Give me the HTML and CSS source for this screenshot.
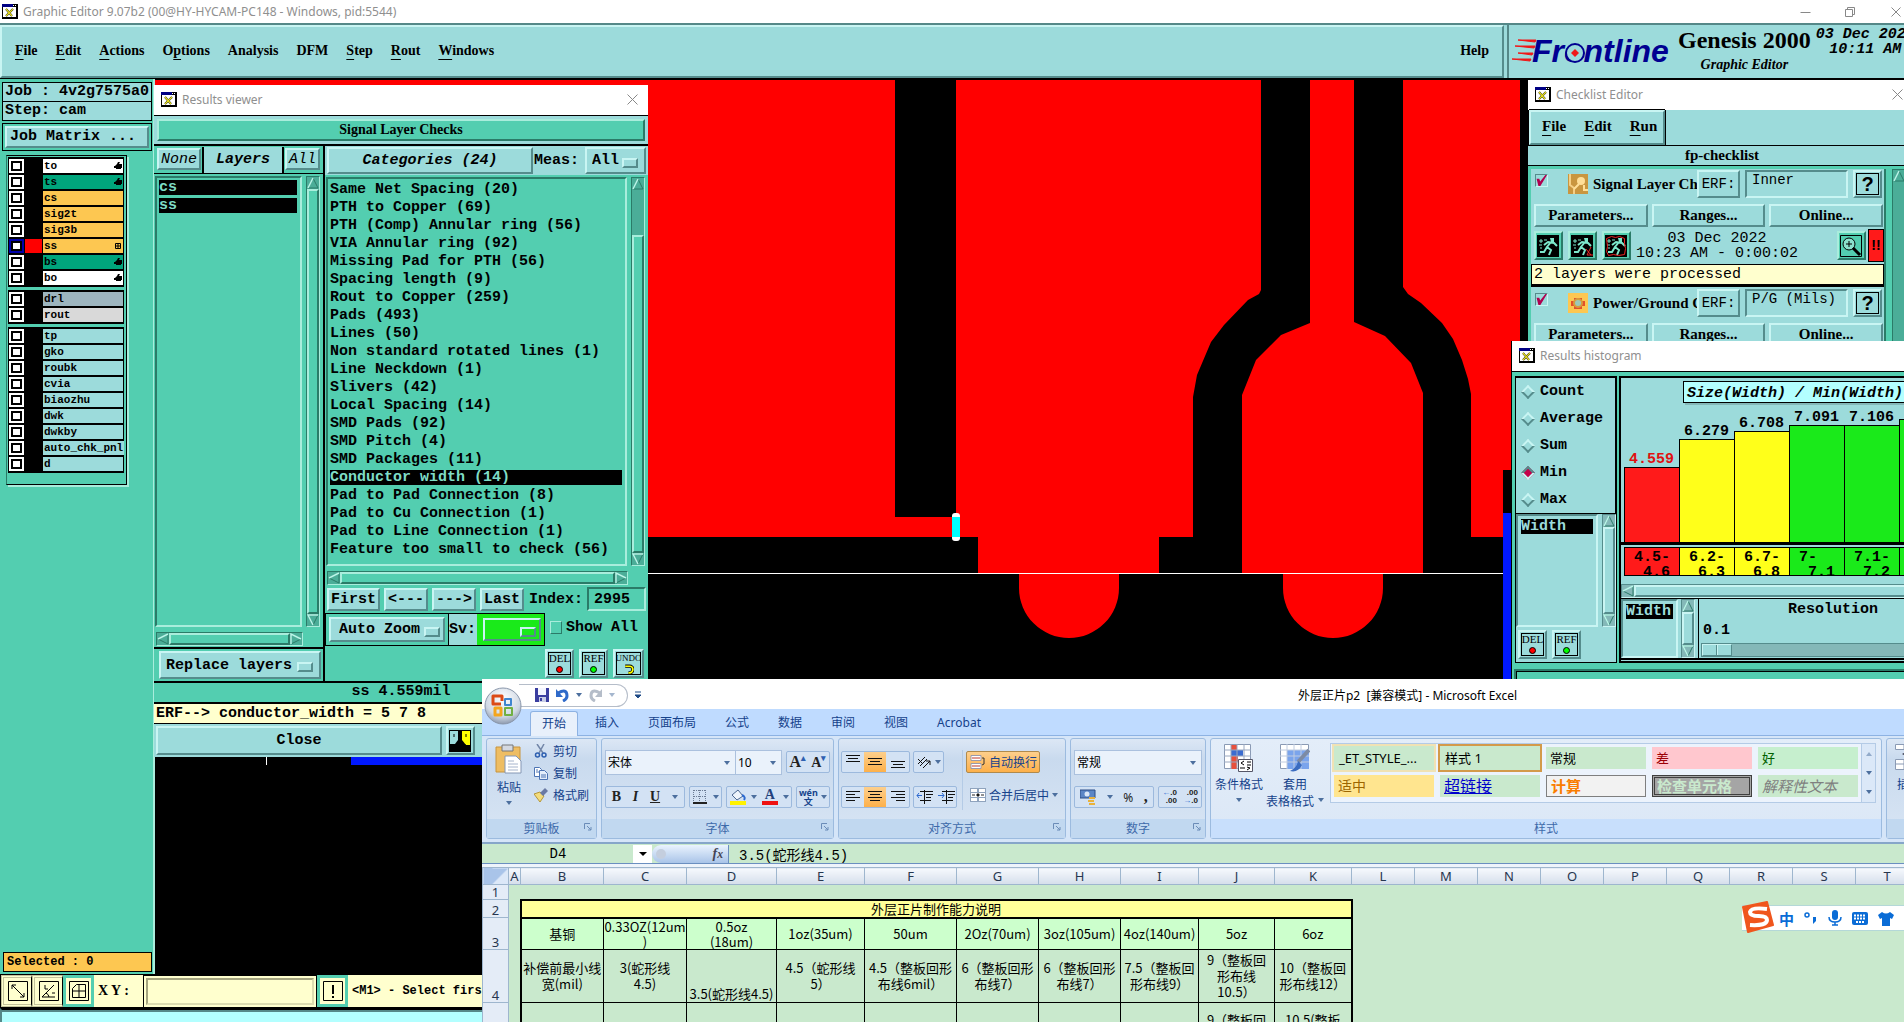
FILE: index.html
```html
<!DOCTYPE html>
<html lang="zh-CN">
<head>
    <meta charset="UTF-8">
    <meta name="viewport" content="width=device-width, initial-scale=1.0">
    <title>Graphic Editor 9.07b2</title>
    <link rel="stylesheet" href="styles.css">
</head>
<body>
    <!-- shared icons -->
    <svg class="defs" width="0" height="0">
        <symbol id="xwin" viewBox="0 0 16 15">
            <path d="M0 0h16v15H0z" fill="#000"/><path d="M1 3h13v10H1z" fill="#fff"/><path d="M0 0h11v3H0z" fill="#000084"/><path d="M11 1h1v1h-1zM13 1h1v1h-1z" fill="#fff"/>
            <path d="M4 5l6 7M11 5l-7 7" stroke="#222" stroke-width="2"/><path d="M4 5l6 7M11 5l-7 7" stroke="#e8e01c" stroke-width="1.2"/>
        </symbol>
        <symbol id="close" viewBox="0 0 11 11"><path d="M.5.5l10 10M10.500.5l-10 10" stroke="#888" fill="none"/></symbol>
        <symbol id="up" viewBox="0 0 12 12"><path d="M6 1L11 11H1z" fill="none" stroke="#2b7b68"/><path d="M1 11L6 1" stroke="#baf5e8" stroke-width="1.5"/></symbol>
        <symbol id="down" viewBox="0 0 12 12"><path d="M1 1h10L6 11z" fill="none" stroke="#2b7b68"/><path d="M11 1H1l5 10" fill="none" stroke="#baf5e8" stroke-width="1.5"/></symbol>
        <symbol id="left" viewBox="0 0 12 12"><path d="M11 1v10L1 6z" fill="none" stroke="#2b7b68"/><path d="M1 6L11 1" stroke="#baf5e8" stroke-width="1.5"/></symbol>
        <symbol id="right" viewBox="0 0 12 12"><path d="M1 1v10l10-5z" fill="none" stroke="#2b7b68"/><path d="M1 11V1l10 5" fill="none" stroke="#baf5e8" stroke-width="1.5"/></symbol>
        <symbol id="hand" viewBox="0 0 8 8"><path d="M4 0h2L5 2h3v4H7v1H2V6H0V4h1l2-2z"/></symbol>
        <symbol id="dd" viewBox="0 0 6 4"><path d="M0 0h6L3 4z" fill="#4c6f9e"/></symbol>
        <symbol id="launch" viewBox="0 0 8 8"><path d="M.5 6V.5H6" fill="none" stroke="#6b8cb8"/><path d="M3 3l4 4M7 4v3H4" fill="none" stroke="#6b8cb8"/></symbol>
        <symbol id="runner" viewBox="0 0 22 22">
            <path d="M0 0h22v22H0z"/><path d="M13 3h4v4h-3z" fill="#7ce8cc"/>
            <path d="M14 7l-4 5 4 3-2 5M10 12l-3 5H3M7 10l4-3 6 1 3 3" fill="none" stroke="#7ce8cc" stroke-width="2"/>
            <path d="M2 6h4M4 4v4M7 5h3M2 10h3M3 13h2" stroke="#7ce8cc"/>
        </symbol>
    </svg>

    <!-- main editor window -->
    <main class="editor">
        <header class="titlebar">
            <svg class="xicon"><use href="#xwin"/></svg>
            <span class="caption">Graphic Editor 9.07b2 (00@HY-HYCAM-PC148 - Windows, pid:5544)</span>
            <svg class="winctl" width="104" height="12"><path d="M.5 6.500h10M45.500 3.500h7v7h-7zM47.500 3V1.500h7v7H53M91.500 1.500l9 9M100.500 1.500l-9 9" fill="none" stroke="#888"/></svg>
        </header>
        <div class="topbar">
            <nav class="menus bevel">
                <a href="#"><u>F</u>ile</a>
                <a href="#"><u>E</u>dit</a>
                <a href="#"><u>A</u>ctions</a>
                <a href="#">O<u>p</u>tions</a>
                <a href="#">Analysis</a>
                <a href="#">DFM</a>
                <a href="#"><u>S</u>tep</a>
                <a href="#"><u>R</u>out</a>
                <a href="#"><u>W</u>indows</a>
                <a href="#" class="help">Help</a>
            </nav>
            <div class="brand">
                <svg class="logo" width="162" height="34">
                    <path d="M6 6h18l-1 2zM3 12h20l-1 2zM6 19h15l-1 2zM0 25h19l-1 2z" fill="#f01818" stroke="#f01818"/>
                    <text x="20" y="28" class="logo-text">Frontline</text>
                    <circle cx="63" cy="19" r="9" fill="#9cdbdb" stroke="#000091" stroke-width="2"/>
                    <path d="M63 15l4 4-4 4-4-4z" fill="#f01818"/>
                </svg>
                <div class="product">
                    <strong>Genesis 2000</strong>
                    <em>Graphic Editor</em>
                </div>
                <div class="clock">03 Dec 2022<br>10:11 AM</div>
            </div>
        </div>
        <div class="work">
            <aside class="side">
                <div class="jobinfo">Job : 4v2g7575a0</div>
                <div class="jobinfo">Step: cam</div>
                <div class="matrix"><button class="xbtn bevel">Job Matrix ...</button></div>
                <div class="layers">
                    <div class="lgroup">
                        <label class="layer"><input type="checkbox"><i></i><span class="c-white">to<svg><use href="#hand"/></svg></span></label>
                        <label class="layer"><input type="checkbox"><i></i><span class="c-green">ts<svg><use href="#hand"/></svg></span></label>
                        <label class="layer"><input type="checkbox"><i></i><span class="c-orange">cs</span></label>
                        <label class="layer"><input type="checkbox"><i></i><span class="c-orange">sig2t</span></label>
                        <label class="layer"><input type="checkbox"><i></i><span class="c-orange">sig3b</span></label>
                        <label class="layer active"><input type="checkbox"><i></i><span class="c-orange">ss<svg viewBox="0 0 8 8"><path d="M1.500 1.500h5v5h-5zM4 1v6M1 4h6" fill="none" stroke="#000"/></svg></span></label>
                        <label class="layer"><input type="checkbox"><i></i><span class="c-green">bs<svg><use href="#hand"/></svg></span></label>
                        <label class="layer"><input type="checkbox"><i></i><span class="c-white">bo<svg><use href="#hand"/></svg></span></label>
                    </div>
                    <div class="lgroup">
                        <label class="layer"><input type="checkbox"><i></i><span class="c-slate">drl</span></label>
                        <label class="layer"><input type="checkbox"><i></i><span class="c-gray">rout</span></label>
                    </div>
                    <div class="lgroup">
                        <label class="layer"><input type="checkbox"><i></i><span>tp</span></label>
                        <label class="layer"><input type="checkbox"><i></i><span>gko</span></label>
                        <label class="layer"><input type="checkbox"><i></i><span>roubk</span></label>
                        <label class="layer"><input type="checkbox"><i></i><span>cvia</span></label>
                        <label class="layer"><input type="checkbox"><i></i><span>biaozhu</span></label>
                        <label class="layer"><input type="checkbox"><i></i><span>dwk</span></label>
                        <label class="layer"><input type="checkbox"><i></i><span>dwkby</span></label>
                        <label class="layer"><input type="checkbox"><i></i><span>auto_chk_pnl</span></label>
                        <label class="layer"><input type="checkbox"><i></i><span>d</span></label>
                    </div>
                </div>
                <div class="selected">Selected : 0</div>
            </aside>
            <div class="canvas">
                <svg width="1749" height="895" viewBox="155 79 1749 895">
                    <path fill="#f00" d="M155 80H895V517H956V80H1261V290L1259 294 1248 300 1224 325 1211 342 1197 375 1193 397V537H1159V573H978V537H155z"/>
                    <path fill="#f00" d="M1310 80H1354V322L1385 336 1411 363 1423 393V573H1242V395L1256 360 1281 335 1310 323z"/>
                    <path fill="#f00" d="M1403 80H1520V470H1503V537H1471V394L1468 379 1462 360 1453 339 1442 323 1421 303 1408 294 1403 287z"/>
                    <path fill="#f00" d="M1019 574h100v14a50 50 0 0 1-100 0zM1283 574h100v14a50 50 0 0 1-100 0z"/>
                    <path fill="#fff" d="M155 573h1348v1H155zM266 755h1v10h-1z"/>
                    <path fill="#0018ff" d="M1503 513h9v170h-9zM351 755h140v10H351z"/>
                    <rect x="952" y="513" width="8" height="28" rx="3" fill="#fff"/>
                    <path fill="#0ff" d="M952 517h8v20h-8z"/>
                </svg>
            </div>
        </div>
        <footer class="status">
            <button class="sbtn" aria-label="Zoom area"><svg viewBox="0 0 20 20"><path d="M.5.500h19v19H.5zM4 4l12 12M4 8V4h4M12 16h4v-4"/></svg></button>
            <button class="sbtn" aria-label="Angle"><svg viewBox="0 0 20 20"><path d="M.5.500h19v19H.5zM3 16h13M3 16L15 4M6 4v4h3M10 16a5 5 0 0 0-3-4M13 12h3"/></svg></button>
            <button class="sbtn teal" aria-label="Grid"><svg viewBox="0 0 20 20"><path d="M3.500 7.500l4-4h9v13h-13zM10 3v14M3 10h14M.5.500h19v19H.5z"/></svg></button>
            <label class="xy" for="xy">X Y :</label>
            <div class="xybox"><input id="xy" type="text"></div>
            <button class="sbtn teal" aria-label="Alert"><svg viewBox="0 0 20 20"><path d="M.5.500h19v19H.5z"/><path d="M10 4v9M10 15v2" stroke-width="2"/></svg></button>
            <span class="hint">&lt;M1&gt; - Select first</span>
        </footer>
        <div class="footline"></div>
    </main>

    <!-- checklist editor -->
    <section class="window checklist">
        <header class="wtitle"><svg class="xicon"><use href="#xwin"/></svg><span>Checklist Editor</span><svg class="x"><use href="#close"/></svg></header>
        <div class="ckmenu">
            <nav class="menus bevel"><a href="#"><u>F</u>ile</a><a href="#"><u>E</u>dit</a><a href="#"><u>R</u>un</a></nav>
        </div>
        <h2 class="ckname">fp-checklist</h2>
        <div class="ckbody">
            <div class="cklist">
                <div class="check">
                    <div class="ckrow">
                        <input type="checkbox" class="tick" checked aria-label="Signal Layer Checks">
                        <svg class="ckicon" viewBox="0 0 20 20"><path d="M0 0h20v20H0z" fill="#c9963f"/><path d="M2 0v11l4 3v6" stroke="#f5cf85" stroke-width="2" fill="none"/><circle cx="13" cy="7" r="4" fill="#ffdf98"/><path d="M11 10l-5 5M16 11v5h4" stroke="#ffdf98" stroke-width="2" fill="none"/></svg>
                        <span class="ckttl">Signal Layer Ch</span>
                        <button class="erf bevel">ERF:</button>
                        <input type="text" class="field" value="Inner" aria-label="ERF">
                        <button class="q bevel">?</button>
                    </div>
                    <div class="ckbtns"><button class="bevel">Parameters...</button><button class="bevel">Ranges...</button><button class="bevel">Online...</button></div>
                    <div class="ckrun">
                        <button class="run bevel" aria-label="Run"><svg><use href="#runner"/></svg></button>
                        <button class="run bevel" aria-label="Run area"><svg viewBox="0 0 22 22"><use href="#runner"/><path d="M15 14l5 6M20 12l-4 8h6" stroke="#e22" fill="none"/></svg></button>
                        <button class="run bevel" aria-label="Run profile"><svg viewBox="0 0 22 22"><use href="#runner"/><path d="M1.500 3.500l5-2 4 1 4-1 5 2v5l1 5-1 6-6 1-5-1-5 1-2-4 1-5z" stroke="#e22" fill="none"/></svg></button>
                        <p class="when">03 Dec 2022<br>10:23 AM - 0:00:02</p>
                        <button class="run mag bevel" aria-label="View results"><svg viewBox="0 0 22 22"><path d="M.5.500h21v21H.5z" fill="#53ceb0" stroke="#000"/><circle cx="9" cy="9" r="6" fill="#8be0cc" stroke="#000"/><path d="M6 9h6M9 6v6" stroke="#000"/><path d="M13 13l7 7" stroke="#000" stroke-width="3"/></svg></button>
                        <span class="alarm">!!</span>
                    </div>
                    <div class="ckmsg">2 layers were processed</div>
                </div>
                <div class="check">
                    <div class="ckrow">
                        <input type="checkbox" class="tick" checked aria-label="Power/Ground Checks">
                        <svg class="ckicon" viewBox="0 0 20 20"><path d="M0 0h20v20H0z" fill="#fdc751"/><path d="M3 8h3V5h8v3h3v5h-3v3H6v-3H3z" fill="#e3512b"/><circle cx="10" cy="10" r="4" fill="#9cc9b8" stroke="#d89c3c" stroke-width="2"/></svg>
                        <span class="ckttl">Power/Ground C</span>
                        <button class="erf bevel">ERF:</button>
                        <input type="text" class="field" value="P/G (Mils)" aria-label="ERF">
                        <button class="q bevel">?</button>
                    </div>
                    <div class="ckbtns"><button class="bevel">Parameters...</button><button class="bevel">Ranges...</button><button class="bevel">Online...</button></div>
                </div>
            </div>
            <div class="vscroll"><svg><use href="#up"/></svg><div class="track"></div></div>
        </div>
    </section>

    <!-- results histogram -->
    <section class="window histogram">
        <header class="wtitle"><svg class="xicon"><use href="#xwin"/></svg><span>Results histogram</span></header>
        <div class="hbody">
            <div class="hleft">
                <div class="radios">
                    <label><input type="radio" name="stat">Count</label>
                    <label><input type="radio" name="stat">Average</label>
                    <label><input type="radio" name="stat">Sum</label>
                    <label><input type="radio" name="stat" checked>Min</label>
                    <label><input type="radio" name="stat">Max</label>
                </div>
                <div class="hlist">
                    <div class="sunk"><span class="picked">Width</span></div>
                    <div class="vscroll"><svg><use href="#up"/></svg><div class="track"><b></b></div><svg><use href="#down"/></svg></div>
                </div>
                <div class="htools">
                    <button class="act bevel"><span>DEL<i class="red"></i></span></button>
                    <button class="act bevel"><span>REF<i class="green"></i></span></button>
                </div>
            </div>
            <div class="hright">
                <div class="chart">
                    <h3>Size(Width) / Min(Width)</h3>
                    <div class="bars">
                        <div class="bar r"><span>4.559</span><b style="height:75px"></b></div>
                        <div class="bar y"><span>6.279</span><b style="height:103px"></b></div>
                        <div class="bar y"><span>6.708</span><b style="height:111px"></b></div>
                        <div class="bar g"><span>7.091</span><b style="height:117px"></b></div>
                        <div class="bar g"><span>7.106</span><b style="height:117px"></b></div>
                        <div class="bar g"><span></span><b style="height:123px"></b></div>
                    </div>
                </div>
                <div class="ranges">
                    <div class="r">4.5-<br> 4.6</div>
                    <div class="y">6.2-<br> 6.3</div>
                    <div class="y">6.7-<br> 6.8</div>
                    <div class="g">7-<br> 7.1</div>
                    <div class="g">7.1-<br> 7.2</div>
                    <div class="g"></div>
                </div>
                <div class="hscroll"><svg><use href="#left"/></svg><div class="track"><b></b></div></div>
                <div class="hfoot">
                    <div class="sunk"><span class="picked">Width</span></div>
                    <div class="vscroll"><svg><use href="#up"/></svg><div class="track"><b></b></div><svg><use href="#down"/></svg></div>
                    <div class="reso"><label for="reso">Resolution</label><output>0.1</output><input id="reso" type="range" min="0" max="100" value="0"></div>
                </div>
            </div>
        </div>
        <div class="hnext"></div>
    </section>

    <!-- results viewer -->
    <section class="window viewer">
        <header class="wtitle"><svg class="xicon"><use href="#xwin"/></svg><span>Results viewer</span><svg class="x"><use href="#close"/></svg></header>
        <h2 class="vhead"><span>Signal Layer Checks</span></h2>
        <div class="vbody">
            <div class="vlayers">
                <div class="vlhead"><button class="xbtn bevel thin">None</button><strong>Layers</strong><button class="xbtn bevel thin">All</button></div>
                <div class="vlist">
                    <ul class="sunk"><li class="picked">cs</li><li class="picked">ss</li></ul>
                    <div class="vscroll"><svg><use href="#up"/></svg><div class="track"><b></b></div><svg><use href="#down"/></svg></div>
                </div>
                <div class="hscroll"><svg><use href="#left"/></svg><div class="track"><b></b></div><svg><use href="#right"/></svg></div>
                <div class="vlfoot"><span class="opt"><select class="bevel" aria-label="Layer action"><option>Replace layers</option></select></span></div>
            </div>
            <div class="vcats">
                <div class="vchead">
                    <strong class="bevel">Categories (24)</strong>
                    <label for="meas">Meas:</label>
                    <span class="opt"><select id="meas" class="bevel"><option>All</option></select></span>
                </div>
                <div class="vlist">
                    <ul class="sunk">
                        <li>Same Net Spacing (20)</li>
                        <li>PTH to Copper (69)</li>
                        <li>PTH (Comp) Annular ring (56)</li>
                        <li>VIA Annular ring (92)</li>
                        <li>Missing Pad for PTH (56)</li>
                        <li>Spacing length (9)</li>
                        <li>Rout to Copper (259)</li>
                        <li>Pads (493)</li>
                        <li>Lines (50)</li>
                        <li>Non standard rotated lines (1)</li>
                        <li>Line Neckdown (1)</li>
                        <li>Slivers (42)</li>
                        <li>Local Spacing (14)</li>
                        <li>SMD Pads (92)</li>
                        <li>SMD Pitch (4)</li>
                        <li>SMD Packages (11)</li>
                        <li class="picked">Conductor width (14)</li>
                        <li>Pad to Pad Connection (8)</li>
                        <li>Pad to Cu Connection (1)</li>
                        <li>Pad to Line Connection (1)</li>
                        <li>Feature too small to check (56)</li>
                    </ul>
                    <div class="vscroll lower"><svg><use href="#up"/></svg><div class="track"><b></b></div><svg><use href="#down"/></svg></div>
                </div>
                <div class="hscroll"><svg><use href="#left"/></svg><div class="track"><b></b></div><svg><use href="#right"/></svg></div>
                <div class="steps">
                    <button class="xbtn bevel">First</button>
                    <button class="xbtn bevel">&lt;---</button>
                    <button class="xbtn bevel">---&gt;</button>
                    <button class="xbtn bevel">Last</button>
                    <label for="index">Index:</label>
                    <input id="index" type="text" value="2995">
                </div>
                <div class="zoomrow">
                    <span class="opt az"><select class="bevel" aria-label="Zoom mode"><option>Auto Zoom</option></select></span>
                    <label for="sv" class="sv">Sv:</label>
                    <span class="opt svopt"><select id="sv" class="bevel"><option></option></select></span>
                    <label class="showall"><input type="checkbox">Show All</label>
                </div>
                <div class="vtools">
                    <button class="act bevel"><span>DEL<i class="red"></i></span></button>
                    <button class="act bevel"><span>REF<i class="green"></i></span></button>
                    <button class="act undo bevel"><span>UNDO<svg viewBox="0 0 10 10"><path d="M2 2h4a2.500 2.500 0 0 1 0 6H5" fill="none" stroke="#000" stroke-width="3"/><path d="M2 2h4a2.500 2.500 0 0 1 0 6H5" fill="none" stroke="#ff0" stroke-width="1.500"/></svg></span></button>
                </div>
            </div>
        </div>
        <div class="vval">ss 4.559mil</div>
        <div class="verf">ERF--&gt; conductor_width = 5 7 8</div>
        <div class="vclose">
            <button class="xbtn bevel wide">Close</button>
            <button class="act bevel" aria-label="Exit"><svg width="22" height="22"><path d="M0 0h22v22H0z"/><path d="M1 1h8v9l-3 4H1z" fill="#9cdbdb"/><path d="M13 1h8v14h-4l-4-5z" fill="#ff0"/><path d="M5 4v3M17 4v3M5 15h12" stroke="#000"/></svg></button>
        </div>
    </section>

    <!-- spreadsheet -->
    <section class="window excel">
        <div class="etitle">
            <svg class="orb" viewBox="0 0 38 38">
                <defs><radialGradient id="orbg" cx=".5" cy=".3" r=".7"><stop offset="0" stop-color="#fff"/><stop offset=".7" stop-color="#cfd8e4"/><stop offset="1" stop-color="#8e9bb0"/></radialGradient></defs>
                <circle cx="19" cy="19" r="18" fill="url(#orbg)" stroke="#8a97ab"/>
                <g fill="none" stroke-width="3" stroke-linejoin="round"><path d="M17 17H9V9h9v5" stroke="#dc4a16"/><path d="M21 12h6v6h-6z" stroke="#3f86cf" stroke-width="2"/><path d="M11 21h6v7h-6z" stroke="#f4a51c"/><path d="M21 21h7v7h-7z" stroke="#71b043" stroke-width="2"/></g>
            </svg>
            <div class="qat">
                <svg width="14" height="14"><path d="M0 0h14v14H0z" fill="#3a3ea0"/><path d="M3 0h8v7H3z" fill="#f4f6ff"/><path d="M4 9h7v5H4z" fill="#c9cfe6"/><path d="M5 10h2v3H5z" fill="#3a3ea0"/></svg>
                <svg width="13" height="14"><path d="M2 5q9-5 9 3 0 3-4 5" fill="none" stroke="#2f6ac9" stroke-width="3"/><path d="M0 1v8h7z" fill="#2f6ac9"/></svg>
                <svg class="dd"><use href="#dd"/></svg>
                <svg width="13" height="14"><path d="M11 5q-9-5-9 3 0 3 4 5" fill="none" stroke="#b5bdc9" stroke-width="3"/><path d="M13 1v8H6z" fill="#b5bdc9"/></svg>
                <svg class="dd pale"><use href="#dd"/></svg>
            </div>
            <svg width="6" height="8" class="qmore"><path d="M0 1h6M0 4h6L3 7z" stroke="#1f4a86" fill="#1f4a86"/></svg>
            <h1>外层正片p2&nbsp; [兼容模式] - Microsoft Excel</h1>
        </div>
        <nav class="tabs">
            <a href="#" class="on">开始</a><a href="#">插入</a><a href="#">页面布局</a><a href="#">公式</a><a href="#">数据</a><a href="#">审阅</a><a href="#">视图</a><a href="#">Acrobat</a>
        </nav>
        <div class="ribbon">
            <div class="group g-clip">
                <div class="gbody">
                    <button class="big"><svg width="28" height="31"><path d="M1 3h24v25H1z" fill="#eebd62" stroke="#c8943c"/><path d="M7 1h11v6H7z" fill="#d4d8e0" stroke="#777"/><path d="M10 12h11l5 5v12H10z" fill="#fff" stroke="#8496b4"/><path d="M13 17h6M13 20h10M13 23h10M13 26h10" stroke="#a6b4cc"/></svg>粘贴<svg class="dd"><use href="#dd"/></svg></button>
                    <div class="stack">
                        <button><svg width="14" height="14"><path d="M3 0l6 9M10 0L5 9" stroke="#7286a8" stroke-width="1.500"/><circle cx="3.500" cy="11" r="2" fill="none" stroke="#2d5fb0" stroke-width="1.500"/><circle cx="10" cy="11" r="2" fill="none" stroke="#2d5fb0" stroke-width="1.500"/></svg>剪切</button>
                        <button><svg width="14" height="14"><path d="M.5 1.500h5l2 2v7h-7z" fill="#fff" stroke="#4c74b4"/><path d="M5.500 4.500h5l3 3v6h-8z" fill="#e4eefb" stroke="#4c74b4"/><path d="M7 9h5M7 11h5M2 4h2M2 6h3" stroke="#4c74b4"/></svg>复制</button>
                        <button><svg width="14" height="14"><path d="M0 6l6-2 4 4-4 6z" fill="#f3dc7c" stroke="#b49538"/><path d="M6 5l5-5 3 3-5 5z" fill="#6a7aa4"/></svg>格式刷</button>
                    </div>
                </div>
                <footer>剪贴板<svg><use href="#launch"/></svg></footer>
            </div>
            <div class="group g-font">
                <div class="gbody rows">
                    <div class="rrow">
                        <span class="combo fname"><select aria-label="Font"><option>宋体</option></select><svg class="dd"><use href="#dd"/></svg></span><span class="combo fsize"><select aria-label="Font size"><option>10</option></select><svg class="dd"><use href="#dd"/></svg></span>
                        <div class="seg grow"><button class="serif lg">A<sup>▴</sup></button><button class="serif">A<sup>▾</sup></button></div>
                    </div>
                    <div class="rrow">
                        <div class="seg s80"><button class="serif">B</button><button class="serif it">I</button><button class="serif un">U</button><svg class="dd"><use href="#dd"/></svg></div>
                        <div class="seg s34"><svg width="14" height="14"><path d="M1 .5h12M1 6.500h12M.5 0v12M6.500 0v12M12.500 0v12" stroke="#6c7c94" stroke-dasharray="1 1"/><path d="M0 13h14" stroke="#222" stroke-width="2"/></svg><svg class="dd"><use href="#dd"/></svg></div>
                        <div class="seg s66"><svg width="16" height="16"><path d="M2 6l6-5 5 6-6 4z" fill="#eef4fb" stroke="#4b6791"/><path d="M12 6q4 2 2 5" stroke="#2d6ad0" stroke-width="2" fill="none"/><path d="M0 12h16v4H0z" fill="#fff200"/></svg><svg class="dd"><use href="#dd"/></svg><button class="fcolor">A</button><svg class="dd"><use href="#dd"/></svg></div>
                        <div class="seg s34"><button class="wen">wén<br>文</button><svg class="dd"><use href="#dd"/></svg></div>
                    </div>
                </div>
                <footer>字体<svg><use href="#launch"/></svg></footer>
            </div>
            <div class="group g-align">
                <div class="gbody">
                    <div class="rows">
                        <div class="rrow">
                            <div class="seg s69"><svg viewBox="0 0 22 20"><path d="M4 3.500h14M6 6.500h10M4 9.500h14"/></svg><svg class="on" viewBox="0 0 22 20"><path d="M4 6.500h14M6 9.500h10M4 12.500h14"/></svg><svg viewBox="0 0 22 20"><path d="M4 9.500h14M6 12.500h10M4 15.500h14"/></svg></div>
                            <div class="seg s31"><svg width="16" height="16" viewBox="0 0 16 16"><path d="M2 10L9 3M4 12l7-7M7 14l7-7m0 4V7h-4M2 5l4 4"/></svg><svg class="dd"><use href="#dd"/></svg></div>
                        </div>
                        <div class="rrow">
                            <div class="seg s69"><svg viewBox="0 0 22 20"><path d="M4 4.500h14M4 7.500h9M4 10.500h14M4 13.500h9"/></svg><svg class="on" viewBox="0 0 22 20"><path d="M4 4.500h14M6 7.500h10M4 10.500h14M6 13.500h10"/></svg><svg viewBox="0 0 22 20"><path d="M4 4.500h14M9 7.500h9M4 10.500h14M9 13.500h9"/></svg></div>
                            <div class="seg s44"><svg viewBox="0 0 22 20"><path d="M6 4.500h13M12 7.500h7M12 10.500h5M6 13.500h11M10.500 3v14"/><path d="M3 8.500h5M5 6L3 8.500 5 11" stroke="#2d6ad0"/></svg><svg viewBox="0 0 22 20"><path d="M6 4.500h13M12 7.500h7M12 10.500h5M6 13.500h11M10.500 3v14"/><path d="M2 8.500h6M6 6l2 2.500L6 11" stroke="#2d6ad0"/></svg></div>
                        </div>
                    </div>
                    <div class="rows wraps">
                        <button class="on"><svg width="16" height="14"><path d="M1 .5h10v5H1zM1 8.500h10v5H1z" fill="#fff" stroke="#99a"/><path d="M2 3h8M2 11h8" stroke="#c0392b"/><path d="M12 3h2v6l-2 1" fill="none" stroke="#333"/></svg>自动换行</button>
                        <button><svg width="16" height="14"><path d="M0 0h16v14H0z" fill="#8fa3bd"/><path d="M1 1h6v3H1zM9 1h6v3H9zM1 5h14v4H1zM1 10h6v3H1zM9 10h6v3H9z" fill="#fff"/><path d="M2 7h3M14 7h-3M7 6h2v2H7z" stroke="#222"/></svg>合并后居中<svg class="dd"><use href="#dd"/></svg></button>
                    </div>
                </div>
                <footer>对齐方式<svg><use href="#launch"/></svg></footer>
            </div>
            <div class="group g-num">
                <div class="gbody rows">
                    <div class="rrow"><span class="combo ffmt"><select aria-label="Number format"><option>常规</option></select><svg class="dd"><use href="#dd"/></svg></span></div>
                    <div class="rrow">
                        <div class="seg s80"><svg width="16" height="16"><path d="M0 1h15v8H0z" fill="#5c86c6" stroke="#2c4c86"/><circle cx="7" cy="5" r="2.500" fill="#dbe7f8"/><path d="M9 8h6v2H9zM8 11h6v2H8zM9 14h6v2H9z" fill="#e9b23c"/></svg><svg class="dd"><use href="#dd"/></svg><button class="pct">%</button><button class="serif lg">,</button></div>
                        <div class="seg s44"><button class="dec"><i>←</i>.0<br>.00</button><button class="dec">.00<br><i>→</i>.0</button></div>
                    </div>
                </div>
                <footer>数字<svg><use href="#launch"/></svg></footer>
            </div>
            <div class="group g-style">
                <div class="gbody">
                    <button class="big"><svg width="30" height="28"><path d="M.5.500h26v24H.5z" fill="#fff" stroke="#8a9ab4"/><path d="M7 1h6v5H7zM7 12h7v6H7zM7 18h6v7H7z" fill="#e8503c"/><path d="M7 6h12v6H7z" fill="#3c6cd0"/><path d="M7 0v25M13 0v25M20 0v25M0 6h27M0 12h27M0 18h27" stroke="#9aa8c0"/><path d="M14.500 15.500h14v12h-14z" fill="#fff" stroke="#556"/><path d="M20 17l-3 2 3 2M16 24h5M23 18h4M23 21h4M23 23l3 1-3 2" stroke="#000" fill="none"/></svg>条件格式<svg class="dd"><use href="#dd"/></svg></button>
                    <button class="big tbl"><svg width="30" height="28"><path d="M.5.500h28v24H.5z" fill="#fff" stroke="#8a9ab4"/><path d="M7 6h22v19H7z" fill="#7aa4ec"/><path d="M7 0v25M14 0v25M21 0v25M0 6h29M0 12h29M0 18h29" stroke="#c0cce0"/><path d="M29 6L18 18" stroke="#7d8ba4" stroke-width="4"/><path d="M18 17q-1 7-8 10 8 2 12-6z" fill="#3a6cc0"/></svg>套用<span>表格格式<svg class="dd"><use href="#dd"/></svg></span></button>
                    <div class="gallery">
                        <div class="cells">
                            <button class="hov">_ET_STYLE_...</button><button class="cur">样式 1</button><button>常规</button><button class="bad">差</button><button class="good">好</button>
                            <button class="mid">适中</button><button class="link">超链接</button><button class="calc">计算</button><button class="chk">检查单元格</button><button class="expl">解释性文本</button>
                        </div>
                        <div class="gscroll"><svg class="pale"><use href="#dd"/></svg><svg><use href="#dd"/></svg><svg><use href="#dd"/></svg></div>
                    </div>
                </div>
                <footer>样式</footer>
            </div>
            <div class="group g-cell">
                <div class="gbody"><button class="big"><svg width="28" height="28"><path d="M.5.500h26v5H.5zM.5 15.500h26v10H.5zM9 0v5M9 15v10M0 20h27" fill="#fff" stroke="#8a9ab4"/><path d="M13 7v6l-6-3z" fill="#334"/></svg>插入</button></div>
                <footer></footer>
            </div>
        </div>
        <div class="fbar">
            <input class="nbox" value="D4" aria-label="Name box">
            <span class="narrow"><svg width="8" height="4"><path d="M0 0h8L4 4z"/></svg></span>
            <span class="fx"><i></i><em>f<small>x</small></em></span>
            <input class="fval" value="3.5(蛇形线4.5)" aria-label="Formula">
        </div>
        <div class="sheet">
            <table>
                <colgroup>
                    <col class="w26"><col class="w12"><col class="w83"><col class="w83"><col class="w90"><col class="w88"><col class="w92"><col class="w82"><col class="w82"><col class="w78"><col class="w76"><col class="w77">
                    <col class="w63"><col class="w63"><col class="w63"><col class="w63"><col class="w63"><col class="w63"><col class="w63"><col class="w63"><col class="w63">
                </colgroup>
                <tr class="heads"><th class="corner"></th><th>A</th><th>B</th><th>C</th><th>D</th><th>E</th><th>F</th><th>G</th><th>H</th><th>I</th><th>J</th><th>K</th><th>L</th><th>M</th><th>N</th><th>O</th><th>P</th><th>Q</th><th>R</th><th>S</th><th>T</th></tr>
                <tr class="h15"><th>1</th><td></td></tr>
                <tr class="h18"><th>2</th><td></td><td colspan="10" class="ttl">外层正片制作能力说明</td></tr>
                <tr class="h32 oz"><th>3</th><td></td><td>基铜</td><td>0.33OZ(12um<br>)</td><td>0.5oz<br>(18um)</td><td>1oz(35um)</td><td>50um</td><td>2Oz(70um)</td><td>3oz(105um)</td><td>4oz(140um)</td><td>5oz</td><td>6oz</td></tr>
                <tr class="h53 data"><th>4</th><td></td><td>补偿前最小线<br>宽(mil)</td><td>3(蛇形线<br>4.5)</td><td class="low">3.5(蛇形线4.5)</td><td>4.5（蛇形线<br>5）</td><td>4.5（整板回形<br>布线6mil）</td><td>6（整板回形<br>布线7）</td><td>6（整板回形<br>布线7）</td><td>7.5（整板回<br>形布线9）</td><td>9（整板回<br>形布线<br>10.5）</td><td>10（整板回<br>形布线12）</td></tr>
                <tr class="h66 data"><th></th><td></td><td>补偿后最小线<br>宽(mil)</td><td>3(蛇形线<br>4.5)</td><td>3.5(蛇形线<br>4.5)</td><td>4.5(蛇形线<br>5)</td><td>5(整板回形<br>布线6mil)</td><td>6(整板回形<br>布线7)</td><td>6(整板回形<br>布线7)</td><td class="warn">7.5(整板回<br>形布线9)</td><td>9（整板回<br>形布线<br>10.5）</td><td>10.5(整板<br>回形布线<br>12)</td></tr>
            </table>
        </div>
    </section>

    <!-- input method bar -->
    <div class="ime">
        <svg class="sogou" viewBox="0 0 32 32"><path d="M1 6L25 1l6 23-25 7z" fill="#f0561d" stroke="#f0561d" stroke-width="2" stroke-linejoin="round"/><path d="M25 8q-16-2-17 3 0 4 9 4 8 0 8 4 0 6-17 5" fill="none" stroke="#fff" stroke-width="4"/></svg>
        <b>中</b>
        <svg width="14" height="14" viewBox="0 0 14 14"><circle cx="3" cy="4" r="2" fill="none" stroke="#0a6cd6" stroke-width="1.500"/><path d="M9 6h3v4l-3 3" fill="#0a6cd6"/></svg>
        <svg width="14" height="16" viewBox="0 0 14 16"><rect x="4" y="0" width="6" height="10" rx="3" fill="#0a6cd6"/><path d="M1 7q0 5 6 5t6-5M7 12v3M4 15h6" fill="none" stroke="#0a6cd6" stroke-width="1.500"/></svg>
        <svg width="16" height="13" viewBox="0 0 16 13"><rect width="16" height="13" rx="2" fill="#0a6cd6"/><path d="M2 3.500h12M2 6.500h12M4 10h8" stroke="#fff" stroke-width="2" stroke-dasharray="2 1"/></svg>
        <svg width="16" height="15" viewBox="0 0 16 15"><path d="M4 1q4 3 8 0l4 3-2 4-2-1v8H4V7L2 8 0 4z" fill="#0a6cd6"/></svg>
        <svg width="16" height="14" viewBox="0 0 16 14"><path d="M0 0h6v6H0zM0 8h6v6H0zM8 8h6v6H8z" fill="#0a6cd6"/></svg>
    </div>
</body>
</html>
```
FILE: styles.css
```css
* {
    box-sizing: border-box;
}

body {
    position: relative;
    height: 100vh;
    margin: 0;
    overflow: hidden;
    background: #000;
    color: #000;
    font: bold 15px "Liberation Mono", monospace;
}

a {
    color: inherit;
    text-decoration: none;
}

button, input, select {
    margin: 0;
    padding: 0;
    border: 0;
    background: none;
    color: inherit;
    font: inherit;
    border-radius: 0;
}

select {
    appearance: none;
}

h1, h2, h3, p, ul {
    margin: 0;
    padding: 0;
    font: inherit;
    list-style: none;
}

svg {
    flex: none;
}

.defs {
    position: absolute;
}

/* Motif style raised edge */
.bevel {
    background: #9cdbdb;
    border: 2px solid;
    border-color: #c9f5f3 #558c8c #558c8c #c9f5f3;
}

.xicon {
    width: 16px;
    height: 15px;
}

.xbtn {
    white-space: nowrap;
}

/* ---- main window ---- */
.editor {
    display: flex;
    flex-direction: column;
    height: 100%;
}

.titlebar {
    display: flex;
    align-items: center;
    gap: 5px;
    height: 23px;
    padding: 0 0 0 2px;
    background: #fff;
    color: #8f8f8f;
    font: 12px "Noto Sans", sans-serif;
}

.winctl {
    margin-left: auto;
}

.topbar {
    display: flex;
    height: 56px;
    background: #9cdbdb;
    border-top: 2px solid #588;
    border-bottom: 1px solid #000;
}

.menus {
    display: flex;
    align-items: center;
    flex: 1;
    gap: 18px;
    padding: 0 13px 2px;
    font: bold 14px "Liberation Serif", serif;
}

.menus u {
    text-underline-offset: 4px;
}

.topbar .menus {
    margin-right: 3px;
}

.help {
    margin-left: auto;
}

.brand {
    display: flex;
    align-items: center;
    flex: none;
    width: 397px;
    overflow: hidden;
    padding: 0 0 2px 3px;
    border-left: 2px solid #588;
}

.logo-text {
    font: italic bold 32px "Liberation Sans", sans-serif;
    fill: #000091;
}

.product {
    display: flex;
    flex-direction: column;
    align-items: center;
    margin-left: 4px;
    font-family: "Liberation Serif", serif;
    white-space: nowrap;
}

.product strong {
    font-size: 24px;
    line-height: 28px;
}

.product em {
    font-size: 14px;
    line-height: 22px;
}

.clock {
    align-self: flex-start;
    padding: 2px 0 0 5px;
    font-style: italic;
    line-height: 15px;
    text-align: center;
    white-space: nowrap;
}

.work {
    display: flex;
    flex: 1;
    min-height: 0;
}

.side {
    display: flex;
    flex-direction: column;
    flex: none;
    width: 155px;
    padding: 3px 1px 2px 2px;
    background: #53ceb0;
    border-right: 2px solid #a9eddc;
}

.jobinfo {
    height: 20px;
    padding-left: 2px;
    background: #9cdbdb;
    border: 1px solid #000;
    line-height: 18px;
    white-space: nowrap;
}

.jobinfo + .jobinfo {
    margin-top: -1px;
}

.matrix {
    margin-top: 2px;
    padding: 2px;
    border: 1px solid #000;
}

.matrix button {
    display: block;
    width: 100%;
    height: 22px;
    padding-left: 3px;
    line-height: 18px;
    text-align: left;
}

.layers {
    width: 121px;
    margin: 4px 0 0 4px;
    padding: 1px 2px 8px 1px;
    border: 1px solid #000;
    border-left-color: #2b7b68;
    box-shadow: 2px 2px #a9eddc;
}

.lgroup {
    margin-bottom: 3px;
    border: 1px solid #000;
    background: #000;
}

.layer {
    display: grid;
    grid-template-columns: 15px 17px 1fr;
    column-gap: 1px;
    height: 16px;
    padding: 1px 0;
}

.layer input {
    appearance: none;
    width: 15px;
    height: 14px;
    background: #fff;
    border: 2px solid #fff;
    box-shadow: inset 0 0 0 2px #000;
}

.layer.active input {
    border-color: #00a;
}

.layer.active i {
    background: #f00;
}

.layer span {
    display: flex;
    justify-content: space-between;
    align-items: center;
    padding: 0 1px;
    background: #9cdbdb;
    font-size: 11px;
    line-height: 14px;
}

.layer svg {
    width: 8px;
    height: 8px;
}

.layer .c-white { background: #fff; }
.layer .c-green { background: #00a57c; }
.layer .c-orange { background: #fdc751; }
.layer .c-slate { background: #9db5bf; }
.layer .c-gray { background: #d9d9d9; }

.selected {
    height: 20px;
    margin: auto 0 0 1px;
    padding-left: 3px;
    background: #fdc751;
    border: 1px solid #000;
    font-size: 12px;
    line-height: 18px;
}

.canvas {
    flex: 1;
    overflow: hidden;
    background: #000;
}

.canvas svg {
    display: block;
}

.status {
    display: flex;
    align-items: center;
    height: 34px;
    background: #ffffce;
    border: 1px solid #000;
    font-size: 12px;
}

.sbtn {
    flex: none;
    width: 31px;
    height: 32px;
    background: #ffffce;
    border: 3px double #c4c49b;
    border-right: 1px solid #000;
}

.sbtn svg {
    display: block;
    width: 20px;
    height: 20px;
    margin: auto;
    fill: none;
    stroke: #000;
}

.sbtn.teal {
    border: 3px solid #53ceb0;
}

.xy {
    width: 49px;
    padding-left: 4px;
    font: bold 14px "Liberation Serif", serif;
}

.xybox {
    flex: none;
    width: 174px;
    padding: 2px;
    border: 1px solid #000;
}

.xybox input {
    display: block;
    width: 100%;
    height: 27px;
    border: 2px solid;
    border-color: #a4a47e #dcdcb0 #dcdcb0 #a4a47e;
}

.hint {
    padding-left: 4px;
    white-space: nowrap;
}

.footline {
    height: 14px;
    background: #b3ffff;
    border-top: 2px solid #000;
    border-left: 2px solid #588;
    box-shadow: inset 0 2px #588;
}

/* ---- floating windows ---- */
.window {
    position: absolute;
    background: #53ceb0;
    overflow: hidden;
}

.wtitle {
    display: flex;
    align-items: center;
    gap: 5px;
    height: 30px;
    padding: 0 10px 2px 7px;
    background: #fff;
    color: #8f8f8f;
    font: 12px "Noto Sans", sans-serif;
}

.wtitle .x {
    width: 11px;
    height: 11px;
    margin-left: auto;
}

.sunk {
    border: 2px solid;
    border-color: #2b7b68 #a9eddc #a9eddc #2b7b68;
}

.picked {
    background: #000;
    color: #7fdcc6;
}

.vscroll, .hscroll {
    display: flex;
    flex: none;
    background: #4bad98;
    border: 1px solid;
    border-color: #2b7b68 #a9eddc #a9eddc #2b7b68;
}

.vscroll {
    flex-direction: column;
    width: 14px;
}

.hscroll {
    height: 14px;
}

.vscroll svg, .hscroll svg {
    width: 12px;
    height: 12px;
}

.track {
    display: flex;
    flex-direction: column;
    flex: 1;
}

.track b {
    flex: 1;
    background: #53ceb0;
    border: 2px solid;
    border-color: #a9eddc #2b7b68 #2b7b68 #a9eddc;
}

.act {
    flex: none;
    width: 29px;
    height: 29px;
    padding: 1px;
}

.act span {
    display: flex;
    flex-direction: column;
    align-items: center;
    height: 23px;
    overflow: hidden;
    border: 1px solid #000;
    font: 11px/11px "Liberation Serif", serif;
}

.act i {
    width: 7px;
    height: 7px;
    margin-top: 2px;
    border: 1px solid #000;
    border-radius: 50%;
}

.act .red { background: #f00; }
.act .green { background: #0f0; }

.act svg {
    display: block;
}

.act.undo {
    width: 31px;
}

.act.undo span {
    font-size: 9px;
}

.act.undo svg {
    width: 11px;
    height: 11px;
}

/* ---- results viewer ---- */
.viewer {
    left: 154px;
    top: 85px;
    width: 494px;
    height: 672px;
    background: #53ceb0;
}

.vhead {
    height: 31px;
    padding: 3px;
    background: #9cdbdb;
    border-top: 1px solid #000;
    border-bottom: 2px solid #000;
    font: bold 14px "Liberation Serif", serif;
    text-align: center;
}

.vhead span {
    display: block;
    height: 22px;
    background: #53ceb0;
    border: 2px solid;
    border-color: #a9eddc #2b7b68 #2b7b68 #a9eddc;
    line-height: 18px;
}

.vbody {
    display: flex;
    height: 535px;
}

.vlayers {
    display: flex;
    flex-direction: column;
    width: 171px;
    border-right: 2px solid #000;
}

.vlhead {
    display: flex;
    height: 28px;
    padding: 1px 2px 0;
    border-bottom: 1px solid #000;
    text-align: center;
}

.vlhead button {
    margin: 1px 1px 3px;
    padding: 0 2px;
}

.thin {
    font-style: italic;
    font-weight: normal;
}

.vlhead strong {
    flex: 1;
    background: #9cdbdb;
    border: solid #000;
    border-width: 0 2px;
    font-style: italic;
    line-height: 25px;
}

.vlist {
    display: flex;
    flex: 1;
    gap: 4px;
    min-height: 0;
    padding: 2px 3px 0 1px;
}

.vlist ul {
    flex: 1;
    padding: 2px 3px 0 2px;
    overflow: hidden;
}

.vlist li {
    height: 15px;
    margin-bottom: 3px;
    line-height: 15px;
    white-space: nowrap;
}

.vlayers .hscroll {
    margin: 5px 20px 1px 2px;
}

.vlfoot {
    display: flex;
    height: 34px;
    padding: 2px 2px 2px 5px;
    border-top: 2px solid #000;
}

.opt {
    position: relative;
    display: flex;
}

.opt select {
    width: 100%;
    padding-left: 5px;
}

.opt::after {
    content: "";
    position: absolute;
    right: 8px;
    top: 50%;
    width: 12px;
    height: 6px;
    margin-top: -3px;
    border: 2px solid;
    border-color: #c9f5f3 #558c8c #558c8c #c9f5f3;
}

.vlfoot .opt {
    flex: 1;
}

.vcats {
    display: flex;
    flex-direction: column;
    flex: 1;
    min-width: 0;
}

.vchead {
    display: flex;
    align-items: center;
    height: 29px;
    padding: 1px 2px;
    background: #9cdbdb;
}

.vchead strong {
    width: 206px;
    height: 27px;
    font-style: italic;
    line-height: 24px;
    text-align: center;
}

.vchead label {
    width: 52px;
    padding-left: 1px;
}

.vchead .opt {
    flex: 1;
    height: 27px;
}

.vcats .vlist ul {
    padding-top: 3px;
}

.vscroll.lower .track {
    padding-top: 45px;
}

.vcats .hscroll {
    margin: 5px 20px 0 2px;
}

.steps {
    display: flex;
    align-items: center;
    gap: 4px;
    height: 28px;
    padding: 0 2px;
}

.steps button {
    height: 23px;
    padding: 0 2px;
}

.steps label {
    padding-left: 1px;
}

.steps input {
    flex: 1;
    min-width: 0;
    height: 24px;
    padding-left: 5px;
    border: 2px solid;
    border-color: #2b7b68 #a9eddc #a9eddc #2b7b68;
}

.zoomrow {
    display: flex;
    height: 33px;
}

.az {
    width: 124px;
    padding: 3px;
    border: 1px solid #000;
}

.az select {
    padding-left: 8px;
}

.sv {
    width: 28px;
    background: #9cdbdb;
    border: solid #000;
    border-width: 1px 0;
    line-height: 31px;
}

.svopt {
    width: 68px;
    padding: 4px 3px 4px 6px;
    background: #1aea1a;
    border: 1px solid #000;
    border-left: 0;
}

.svopt select {
    background: #1aea1a;
}

.showall {
    display: flex;
    align-items: center;
    gap: 4px;
    padding: 0 0 4px 5px;
}

.showall input {
    appearance: none;
    width: 12px;
    height: 13px;
    border: 1px solid;
    border-color: #a9eddc #2b7b68 #2b7b68 #a9eddc;
}

.vtools {
    display: flex;
    justify-content: flex-end;
    gap: 5px;
    height: 35px;
    padding: 3px 4px;
}

.vval {
    height: 23px;
    border: solid #000;
    border-width: 2px 0;
    line-height: 18px;
    text-align: center;
}

.verf {
    height: 20px;
    padding-left: 2px;
    background: #ffffce;
    border-bottom: 1px solid #000;
    line-height: 19px;
}

.vclose {
    display: flex;
    align-items: center;
    gap: 4px;
    height: 33px;
    padding: 0 2px;
    background: #9cdbdb;
}

.vclose .wide {
    flex: none;
    width: 286px;
    height: 29px;
}

/* ---- checklist ---- */
.checklist {
    left: 1528px;
    top: 80px;
    width: 388px;
    height: 600px;
    background: #9cdbdb;
}

.checklist .wtitle {
    padding-right: 13px;
}

.ckmenu {
    display: flex;
    height: 36px;
    border-bottom: 1px solid #000;
    border-left: 1px solid #000;
}

.ckmenu .menus {
    flex: none;
    width: 136px;
    padding-left: 11px;
    box-shadow: 1px 0 #000, 0 -1px #000;
    font-size: 15px;
}

.ckname {
    height: 20px;
    border-bottom: 1px solid #000;
    font: bold 15px/19px "Liberation Serif", serif;
    text-align: center;
}

.ckbody {
    display: flex;
    gap: 6px;
    height: 510px;
    padding: 3px 0 0 3px;
    background: #53ceb0;
}

.cklist {
    flex: none;
    width: 355px;
    background: #9cdbdb;
    border-right: 2px solid #2b7b68;
}

.check {
    height: 119px;
}

.ckbody .vscroll {
    width: 18px;
}

.ckrow {
    display: flex;
    height: 35px;
    padding: 1px 1px 0 4px;
}

.tick {
    appearance: none;
    flex: none;
    width: 13px;
    height: 13px;
    margin-top: 4px;
    border: 1px solid;
    border-color: #558c8c #c9f5f3 #c9f5f3 #558c8c;
}

.tick::before {
    content: "";
    display: block;
    height: 11px;
    background: #b00050;
    clip-path: polygon(5% 35%, 30% 35%, 38% 60%, 85% 0, 100% 0, 40% 100%, 22% 100%);
}

.ckicon {
    width: 20px;
    height: 20px;
    margin: 4px 5px 0 20px;
}

.ckttl {
    width: 104px;
    overflow: hidden;
    font: bold 15px/28px "Liberation Serif", serif;
    white-space: nowrap;
}

.erf {
    width: 43px;
    height: 28px;
    font-weight: normal;
    font-size: 14px;
}

.field {
    width: 103px;
    height: 28px;
    margin: 0 5px;
    padding: 0 0 9px 5px;
    border: 2px solid;
    border-color: #558c8c #c9f5f3 #c9f5f3 #558c8c;
    font-weight: normal;
    font-size: 14px;
}

.q {
    width: 29px;
    height: 28px;
    font: bold 20px/20px "Liberation Sans", sans-serif;
    box-shadow: inset 0 0 0 1px #9cdbdb, inset 0 0 0 2px #000;
}

.ckbtns {
    display: grid;
    grid-template-columns: 1fr 1fr 1fr;
    gap: 4px;
    padding: 0 1px 0 3px;
}

.ckbtns button {
    height: 23px;
    font: bold 15px/17px "Liberation Serif", serif;
}

.ckrun {
    display: flex;
    align-items: center;
    gap: 5px;
    height: 37px;
    padding-left: 3px;
}

.run {
    flex: none;
    width: 29px;
    height: 29px;
    padding: 1px;
    background: #53ceb0;
    border-color: #a9eddc #2b7b68 #2b7b68 #a9eddc;
}

.run svg {
    display: block;
    width: 22px;
    height: 22px;
}

.when {
    width: 162px;
    font-weight: normal;
    line-height: 15px;
    text-align: center;
    white-space: nowrap;
}

.mag {
    margin-left: auto;
}

.alarm {
    width: 16px;
    height: 33px;
    margin-left: -3px;
    background: #ff1a1a;
    border: 1px solid #000;
    font: bold 14px/31px "Liberation Sans", sans-serif;
    text-align: center;
}

.ckmsg {
    height: 23px;
    padding-left: 2px;
    background: #ffffce;
    border: 1px solid #000;
    border-bottom-width: 3px;
    font-weight: normal;
    line-height: 19px;
}

/* ---- histogram ---- */
.histogram {
    left: 1511px;
    top: 341px;
    width: 448px;
    height: 339px;
    border-left: 1px solid #000;
}

.histogram .vscroll, .histogram .hscroll {
    background: #84b8b8;
    border-color: #558c8c #c9f5f3 #c9f5f3 #558c8c;
}

.histogram .track b {
    background: #9cdbdb;
    border-color: #c9f5f3 #558c8c #558c8c #c9f5f3;
}

.histogram .sunk {
    border-color: #558c8c #c9f5f3 #c9f5f3 #558c8c;
}

.histogram .picked {
    display: block;
    height: 15px;
    line-height: 15px;
    color: #9cdbdb;
}

.hbody {
    display: flex;
    gap: 2px;
    height: 292px;
    padding: 4px 0 0 3px;
    border-top: 1px solid #000;
}

.hleft {
    display: flex;
    flex-direction: column;
    flex: none;
    width: 102px;
    background: #9cdbdb;
    border: 1px solid #000;
    border-top-width: 2px;
}

.radios {
    border-bottom: 1px solid #000;
    border-right: 1px solid #000;
}

.radios label {
    display: flex;
    align-items: center;
    gap: 7px;
    height: 27px;
    padding-left: 7px;
}

.radios input {
    appearance: none;
    width: 10px;
    height: 10px;
    border: 2px solid;
    border-color: #c9f5f3 #558c8c #558c8c #c9f5f3;
    transform: rotate(45deg);
}

.radios input:checked {
    background: #c4004a;
    border-color: #558c8c #c9f5f3 #c9f5f3 #558c8c;
}

.hlist {
    display: flex;
    gap: 4px;
    height: 116px;
}

.hlist .sunk {
    flex: 1;
    padding: 3px;
}

.htools {
    display: flex;
    gap: 5px;
    padding: 3px 2px;
}

.hright {
    flex: 1;
    background: #9cdbdb;
    border: 2px solid #000;
    border-right: 0;
}

.chart {
    display: flex;
    flex-direction: column;
    height: 167px;
    padding-left: 3px;
    border-bottom: 3px solid #000;
}

.chart h3 {
    width: 240px;
    height: 22px;
    margin: 3px 0 -25px 59px;
    padding-left: 3px;
    background: #b3ffff;
    border: 1px solid #000;
    box-shadow: 2px 2px #84b8b8;
    font-style: italic;
    line-height: 24px;
    white-space: nowrap;
}

.bars, .ranges {
    display: flex;
}

.bars {
    flex: 1;
    align-items: flex-end;
}

.bar {
    display: flex;
    flex-direction: column;
    flex: none;
    width: 55px;
    line-height: 15px;
    text-align: center;
}

.bar b {
    border: solid #000;
    border-width: 1px 0 0 1px;
}

.bar.r { color: #e01010; }
.r b, .ranges .r { background: #ff1a1a; }
.y b, .ranges .y { background: #ffff1a; }
.g b, .ranges .g { background: #1aea1a; }

.ranges {
    margin: 2px 0 8px 3px;
}

.ranges div {
    flex: none;
    width: 55px;
    height: 29px;
    padding: 2px 0 0 9px;
    border: 1px solid #000;
    border-right: 0;
    line-height: 15px;
    white-space: pre;
}

.hfoot {
    display: flex;
    gap: 3px;
    height: 62px;
    border-top: 1px solid #000;
    border-bottom: 2px solid #000;
}

.hfoot .sunk {
    width: 57px;
    padding: 3px;
}

.reso {
    display: flex;
    flex-direction: column;
    flex: 1;
    padding: 1px 2px;
    border-left: 1px solid #000;
}

.reso label {
    padding-left: 87px;
    line-height: 19px;
}

.reso output {
    padding-left: 2px;
    line-height: 24px;
}

.reso input {
    appearance: none;
    width: 100%;
    height: 14px;
    background: #84b8b8;
    border: 1px solid #558c8c;
}

.reso input::-webkit-slider-thumb {
    appearance: none;
    width: 30px;
    height: 12px;
    background: linear-gradient(90deg, #9cdbdb 13px, #558c8c 13px 14px, #c9f5f3 14px 15px, #9cdbdb 15px);
    border: 1px solid;
    border-color: #c9f5f3 #558c8c #558c8c #c9f5f3;
}

.hnext {
    margin: 8px 0 0 4px;
    height: 20px;
    border: 1px solid #000;
    outline: 2px solid #2b7b68;
}

/* ---- excel ---- */
.excel {
    left: 482px;
    right: 0;
    top: 679px;
    bottom: 0;
    display: flex;
    flex-direction: column;
    background: #c9e9cd;
    color: #15428b;
    font: 12px "Noto Sans", "Noto Sans CJK SC", sans-serif;
}

.etitle {
    display: flex;
    flex: none;
    align-items: center;
    height: 30px;
    padding: 2px 0 0 2px;
    background: #fff;
}

.orb {
    position: relative;
    z-index: 1;
    width: 38px;
    height: 38px;
    margin-bottom: -22px;
}

.qat {
    display: flex;
    align-items: center;
    gap: 7px;
    height: 23px;
    margin-left: -3px;
    padding: 0 12px 0 16px;
    border: 1px solid #b5bdc9;
    border-left: 0;
    border-radius: 0 12px 12px 0;
}

.qmore {
    margin-left: 7px;
}

.dd {
    width: 6px;
    height: 4px;
}

.pale {
    opacity: .5;
}

.etitle h1 {
    flex: 1;
    padding-left: 270px;
    color: #000;
    text-align: center;
    white-space: nowrap;
}

.tabs {
    display: flex;
    flex: none;
    align-items: flex-end;
    height: 27px;
    padding-left: 48px;
    gap: 5px;
    background: #bfdbff;
    border-bottom: 1px solid #8db2e3;
}

.tabs a {
    padding: 0 12px;
    line-height: 24px;
}

.tabs .on {
    margin-bottom: -1px;
    background: #e8f0fb;
    border: 1px solid #8db2e3;
    border-bottom: 0;
    border-radius: 3px 3px 0 0;
    padding: 0 11px;
}

.ribbon {
    display: flex;
    flex: none;
    gap: 4px;
    height: 108px;
    padding: 2px 4px 3px;
    background: #d5e5f8;
    border-bottom: 2px solid #86a6c9;
    overflow: hidden;
}

.group {
    display: flex;
    flex-direction: column;
    flex: none;
    background: linear-gradient(#dce7f5, #c9daee 20%, #d8e5f4);
    border: 1px solid #9cbbdf;
    border-radius: 3px;
}

.group footer {
    display: flex;
    justify-content: center;
    position: relative;
    height: 19px;
    background: #c1d8f0;
    color: #3e6aaa;
    line-height: 19px;
}

.group footer svg {
    position: absolute;
    right: 4px;
    top: 4px;
    width: 8px;
    height: 8px;
}

.gbody {
    display: flex;
    flex: 1;
    min-height: 0;
}

.rows {
    display: flex;
    flex-direction: column;
    gap: 11px;
}

.rrow {
    display: flex;
    gap: 4px;
    height: 24px;
    align-items: center;
}

.g-clip { width: 111px; }
.g-font { width: 233px; }
.g-align { width: 228px; }
.g-num { width: 136px; }
.g-style { width: 672px; background: linear-gradient(#e3edf9, #dbe7f6); }
.g-cell { width: 90px; }

.g-style footer {
    background: #c8dffc;
}

.big {
    display: flex;
    flex-direction: column;
    align-items: center;
    width: 44px;
    padding-top: 5px;
    line-height: 17px;
    white-space: nowrap;
}

.big > svg:first-child {
    margin-bottom: 4px;
}

.big .dd {
    margin-top: 5px;
}

.stack {
    padding: 1px 0 0 3px;
}

.stack button {
    display: flex;
    align-items: center;
    gap: 5px;
    height: 22px;
}

.gbody.rows {
    padding: 11px 3px 0;
}

.combo {
    position: relative;
    display: flex;
    height: 25px;
    background: #eaf2fb;
    border: 1px solid #abc1de;
    color: #000;
}

.combo select {
    width: 100%;
    padding-left: 2px;
}

.combo .dd {
    position: absolute;
    right: 5px;
    top: 10px;
}

.fname { width: 131px; }
.fsize { width: 47px; margin-left: -5px; }
.ffmt { width: 128px; }

.seg {
    display: flex;
    justify-content: space-around;
    align-items: center;
    height: 22px;
    border: 1px solid #9cb9dd;
    border-radius: 2px;
    background: #d3e2f4;
}

.s80 { width: 80px; }
.s34 { width: 34px; }
.s66 { width: 66px; }
.s69 { width: 69px; }
.s31 { width: 31px; }
.s44 { width: 44px; }
.grow { flex: 1; }

.serif {
    color: #222;
    font: bold 14px "Liberation Serif", serif;
}

.serif.lg { font-size: 16px; }
.serif.it { font-style: italic; }
.serif.un { text-decoration: underline; }

.serif sup {
    color: #2d5fb0;
    font-size: 9px;
    line-height: 9px;
}

.pct {
    color: #222;
}

.fcolor {
    width: 16px;
    height: 16px;
    border-bottom: 4px solid #e11;
    color: #23417c;
    font: bold 14px/12px "Liberation Serif", serif;
}

.wen {
    font: bold 9px/9px "Noto Sans", "Noto Sans CJK SC", sans-serif;
}

.g-align .gbody {
    padding: 11px 2px 0;
}

.g-align .rows:first-child {
    width: 122px;
    border-right: 1px solid #b4cbe6;
    height: 60px;
}

.g-align .rrow {
    gap: 3px;
}

.g-align .seg svg:not(.dd) {
    fill: none;
    stroke: #111;
}

.s69 svg, .s44 svg {
    width: 22px;
    height: 20px;
}

.seg .dd {
    width: 6px;
    height: 4px;
}

.seg svg.on, .wraps .on {
    background: linear-gradient(#fdcf8c, #fdb04a);
}

.wraps {
    padding: 1px 0 0 3px;
}

.wraps button {
    display: flex;
    align-items: center;
    gap: 3px;
    height: 22px;
    padding: 0 3px;
    border: 1px solid transparent;
    white-space: nowrap;
}

.wraps .on {
    width: 74px;
    border-color: #b08a4c;
    border-radius: 2px;
}

.dec {
    color: #222;
    font: bold 8px/8px "Liberation Sans", sans-serif;
    text-align: right;
}

.dec i {
    color: #2d6ad0;
    font-style: normal;
}

.g-style .big {
    width: 56px;
}

.tbl span {
    display: flex;
    gap: 4px;
}

.gallery {
    display: flex;
    height: 60px;
    margin: 4px 0 0 7px;
    background: #ecf3fc;
    border: 1px solid #b4cbe6;
}

.cells {
    display: grid;
    grid-template-columns: repeat(5, 106px);
    grid-template-rows: 28px 28px;
}

.cells button {
    margin: 3px;
    padding-left: 4px;
    background: #c9e9cd;
    color: #000;
    font-size: 13px;
    line-height: 20px;
    text-align: left;
    white-space: nowrap;
    overflow: hidden;
}

.cells .hov, .cells .cur {
    margin: 0 1px;
    padding-left: 5px;
    border: 2px solid #f0e2b4;
}

.cells .cur { border-color: #d39a4a; }
.cells .bad { background: #ffc7ce; color: #9c0006; }
.cells .good { background: #c6efce; color: #006100; }
.cells .mid { background: #ffe58f; color: #9c6500; font-size: 14px; }
.cells .link { color: #00c; font-size: 16px; text-decoration: underline; }
.cells .calc { background: #f2f2f2; border: 1px solid #7f7f7f; color: #fa7d00; font-weight: bold; font-size: 15px; }
.cells .chk { padding-left: 2px; background: #a5a5a5; border: 3px double #3f3f3f; color: #c9e9cd; font-weight: bold; font-size: 15px; line-height: 16px; }
.cells .expl { color: #7f7f7f; font-size: 15px; font-style: italic; }

.gscroll {
    display: flex;
    flex-direction: column;
    justify-content: space-around;
    align-items: center;
    width: 14px;
    background: #dbe8f8;
    border-left: 1px solid #b4cbe6;
}

.gscroll svg {
    width: 6px;
    height: 4px;
}

.gscroll svg:first-child {
    transform: rotate(180deg);
}

.fbar {
    display: flex;
    flex: none;
    height: 23px;
    padding: 1px 0 4px 1px;
    background: linear-gradient(#c9e9cd 19px, #6b8fc0 19px 20px, #eef4fb 20px);
    color: #000;
    font: 14px "Liberation Mono", "Noto Sans CJK SC", monospace;
}

.nbox {
    width: 150px;
    text-align: center;
}

.narrow {
    display: flex;
    align-items: center;
    justify-content: center;
    width: 19px;
    background: #fff;
}

.fx {
    display: flex;
    align-items: center;
    justify-content: space-between;
    width: 77px;
    padding: 0 5px 0 4px;
    background: linear-gradient(#eaf3fe, #a9c4e8);
    border-right: 1px solid #6b8fc0;
    border-radius: 9px 0 0 9px;
    font: bold 14px "Liberation Serif", serif;
    color: #445;
}

.fx i {
    width: 10px;
    height: 10px;
    border-radius: 50%;
    background: #c4cede;
}

.fval {
    flex: 1;
    padding-left: 10px;
}

.sheet {
    flex: 1;
    overflow: hidden;
}

.sheet table {
    width: 1436px;
    table-layout: fixed;
    border-collapse: collapse;
    color: #000;
    font: 13px/16px "Noto Sans CJK SC", sans-serif;
    text-align: center;
}

.w12 { width: 12px; }
.w26 { width: 26px; }
.w63 { width: 63px; }
.w76 { width: 76px; }
.w77 { width: 77px; }
.w78 { width: 78px; }
.w82 { width: 82px; }
.w83 { width: 83px; }
.w88 { width: 88px; }
.w90 { width: 90px; }
.w92 { width: 92px; }

.sheet th, .sheet td {
    padding: 0;
    white-space: nowrap;
}

.sheet th {
    background: #e4ecf7;
    border: 1px solid #9eb6ce;
    color: #27364f;
    font: 13px/14px "Noto Sans", sans-serif;
    vertical-align: bottom;
}

.heads {
    height: 17px;
}

.sheet .heads th {
    background: linear-gradient(#f6f9fd, #d5deeb);
    vertical-align: middle;
}

.sheet .heads .corner {
    background: linear-gradient(135deg, #a9c4e9 60%, #dce8f8 60%);
}

.h15 { height: 15px; }
.h18 { height: 18px; }
.h32 { height: 32px; }
.h53 { height: 53px; }
.h66 { height: 66px; }

.sheet .ttl {
    background: #ffff99;
    border: 2px solid #000;
}

.oz td:nth-child(n+3), .data td:nth-child(n+3) {
    border: 1px solid #000;
}

.oz td:nth-child(n+3) {
    background: #ccffcc;
    line-height: 15px;
}

.sheet tr td:nth-child(3) {
    border-left-width: 2px;
}

.sheet tr td:nth-child(12) {
    border-right-width: 2px;
}

.sheet .low {
    vertical-align: bottom;
}

.sheet .warn {
    color: #e02020;
}

/* ---- input method bar ---- */
.ime {
    position: absolute;
    left: 1742px;
    right: 0;
    top: 905px;
    display: flex;
    align-items: center;
    gap: 10px;
    height: 26px;
    background: #fff;
    border-top: 1px solid #b4d8d8;
    border-bottom: 1px solid #b4d8d8;
    color: #0a6cd6;
    font: 15px "Noto Sans CJK SC", sans-serif;
}

.sogou {
    width: 32px;
    height: 32px;
    margin: -3px -5px 0 0;
}
```
